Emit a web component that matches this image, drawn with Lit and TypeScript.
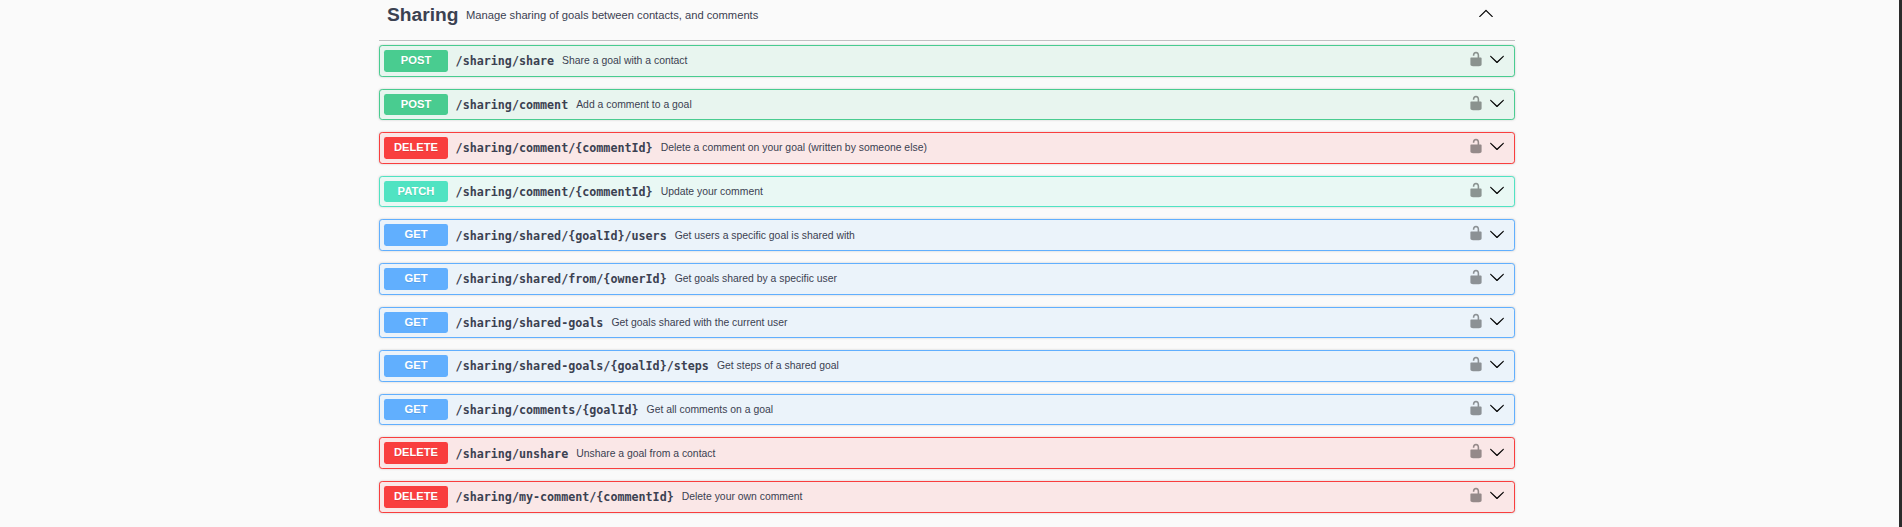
import { LitElement, html, css } from "lit";
import { customElement, property } from "lit/decorators.js";

interface Operation {
  method: string;
  path: string;
  summary: string;
}

const operations: Operation[] = [
  { method: "post", path: "/sharing/share", summary: "Share a goal with a contact" },
  { method: "post", path: "/sharing/comment", summary: "Add a comment to a goal" },
  { method: "delete", path: "/sharing/comment/{commentId}", summary: "Delete a comment on your goal (written by someone else)" },
  { method: "patch", path: "/sharing/comment/{commentId}", summary: "Update your comment" },
  { method: "get", path: "/sharing/shared/{goalId}/users", summary: "Get users a specific goal is shared with" },
  { method: "get", path: "/sharing/shared/from/{ownerId}", summary: "Get goals shared by a specific user" },
  { method: "get", path: "/sharing/shared-goals", summary: "Get goals shared with the current user" },
  { method: "get", path: "/sharing/shared-goals/{goalId}/steps", summary: "Get steps of a shared goal" },
  { method: "get", path: "/sharing/comments/{goalId}", summary: "Get all comments on a goal" },
  { method: "delete", path: "/sharing/unshare", summary: "Unshare a goal from a contact" },
  { method: "delete", path: "/sharing/my-comment/{commentId}", summary: "Delete your own comment" },
];

@customElement("operation-row")
export class OperationRow extends LitElement {
  @property({ attribute: false }) op!: Operation;

  static styles = css`
    :host {
      display: block;
    }
    .row {
      box-sizing: border-box;
      height: 31.6px;
      display: flex;
      align-items: center;
      padding: 4px;
      border: 1px solid var(--tone);
      border-radius: 3.2px;
      background: var(--tint);
      box-shadow: 0 0 2.4px rgba(0, 0, 0, 0.19);
      white-space: nowrap;
    }
    .post {
      --tone: #49cc90;
      --tint: #e8f5ef;
    }
    .delete {
      --tone: #f93e3e;
      --tint: #fae7e7;
    }
    .patch {
      --tone: #50e3c2;
      --tint: #e9f8f4;
    }
    .get {
      --tone: #61affe;
      --tint: #ebf3fa;
    }
    .method {
      width: 64px;
      height: 21.6px;
      line-height: 21.6px;
      border-radius: 2.4px;
      background: var(--tone);
      color: #fff;
      font-size: 11.2px;
      font-weight: 700;
      text-align: center;
      text-transform: uppercase;
      text-shadow: 0 1px 0 rgba(0, 0, 0, 0.1);
    }
    .path {
      margin-left: 7.6px;
      padding-top: 1px;
      font: 700 11.69px/16px "DejaVu Sans Mono", monospace;
    }
    .summary {
      flex: 1;
      margin-left: 8px;
      padding-top: 1px;
      font-size: 10.4px;
      line-height: 14px;
    }
    .lock {
      width: 16px;
      height: 16px;
      margin: 0 5px 3.6px 0;
      opacity: 0.4;
    }
    .arrow {
      width: 16px;
      height: 16px;
      margin: 0 5px 3px 0;
    }
  `;

  render() {
    const { method, path, summary } = this.op;
    return html`
      <div class="row ${method}">
        <span class="method">${method}</span>
        <span class="path">${path}</span>
        <span class="summary">${summary}</span>
        <svg class="lock" viewBox="0 0 20 20">
          <path d="M15.8 8H14V5.6C14 2.703 12.665 1 10 1 7.334 1 6 2.703 6 5.6V6h2v-.801C8 3.754 8.797 3 10 3c1.203 0 2 .754 2 2.199V8H4c-.553 0-1 .646-1 1.199V17c0 .549.428 1.139.951 1.307l1.197.387C5.672 18.861 6.55 19 7.1 19h5.8c.549 0 1.428-.139 1.951-.307l1.196-.387c.524-.167.953-.757.953-1.306V9.199C17 8.646 16.352 8 15.8 8z" />
        </svg>
        <svg class="arrow" viewBox="0 0 20 20">
          <path d="M17.418 6.109c.272-.268.709-.268.979 0s.271.701 0 .969l-7.908 7.83c-.27.268-.707.268-.979 0l-7.908-7.83c-.27-.268-.27-.701 0-.969s.709-.268.979 0L10 13.25z" />
        </svg>
      </div>
    `;
  }
}

@customElement("app-root")
export class AppRoot extends LitElement {
  static styles = css`
    :host {
      display: block;
      box-sizing: border-box;
      height: 527px;
      overflow: hidden;
      background: #fafafa;
      border-right: 3px solid #2b2b2b;
      color: #3b4151;
      font-family: "Liberation Sans", Arial, sans-serif;
    }
    .section {
      width: 1136px;
      margin-left: 379px;
    }
    .header {
      box-sizing: border-box;
      height: 41px;
      display: flex;
      align-items: flex-start;
      padding: 0 21px 0 8px;
      border-bottom: 1px solid #c0c0c2;
    }
    .title {
      margin: 4px 0 0;
      font-size: 19.2px;
      line-height: 22px;
      font-weight: 700;
    }
    .about {
      flex: 1;
      margin: 7px 0 0 7.6px;
      font-size: 11.2px;
      line-height: 16px;
    }
    .collapse {
      width: 16px;
      height: 16px;
      margin-top: 5px;
    }
    .list {
      display: flex;
      flex-direction: column;
      gap: 12px;
      padding-top: 4px;
    }
  `;

  render() {
    return html`
      <section class="section">
        <header class="header">
          <h3 class="title">Sharing</h3>
          <p class="about">Manage sharing of goals between contacts, and comments</p>
          <svg class="collapse" viewBox="0 0 20 20">
            <path d="M17.418 14.908c.272.268.709.268.979 0s.271-.701 0-.969l-7.908-7.83c-.27-.268-.707-.268-.979 0l-7.908 7.83c-.27.268-.27.701 0 .969s.709.268.979 0L10 7.767z" />
          </svg>
        </header>
        <div class="list">
          ${operations.map((op) => html`<operation-row .op=${op}></operation-row>`)}
        </div>
      </section>
    `;
  }
}
